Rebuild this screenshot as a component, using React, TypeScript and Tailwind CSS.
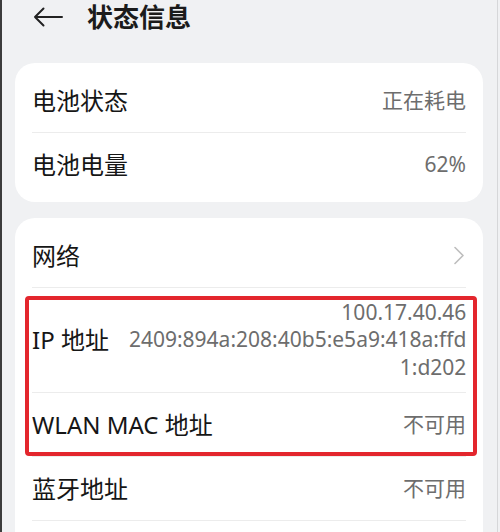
import React from "react";

const font = { fontFamily: '"Noto Sans", "Noto Sans CJK SC", sans-serif' };

function Row({
  label,
  value,
  divider = true,
  chevron = false,
}: {
  label: string;
  value?: React.ReactNode;
  divider?: boolean;
  chevron?: boolean;
}) {
  return (
    <div className={divider ? "border-b border-[#ececec]" : ""}>
      <div className="flex h-[63px] items-center justify-between gap-5">
        <div className="shrink-0 text-[24px] text-[#161616]">{label}</div>
        {value && (
          <div className="text-right text-[21px] text-[#6d6d6d]">{value}</div>
        )}
        {chevron && (
          <svg width="12" height="19" viewBox="0 0 12 19" className="mr-[1px]">
            <path
              d="M2 1.5 L10 9.5 L2 17.5"
              fill="none"
              stroke="#bdbdbd"
              strokeWidth="1.6"
              strokeLinecap="round"
              strokeLinejoin="round"
            />
          </svg>
        )}
      </div>
    </div>
  );
}

export default function App() {
  return (
    <main
      className="relative h-[532px] w-[500px] overflow-hidden bg-[#f0f1f3]"
      style={font}
    >
      <div className="absolute left-0 top-0 h-full w-[2px] bg-[#3c3c3c]" />
      <div className="absolute right-[2px] top-0 h-full w-[1px] bg-[#d6d7d9]" />

      <div className="flex h-[34px] items-center pl-[33px]">
        <svg width="30" height="20" viewBox="0 0 30 20">
          <path
            d="M29 10 H2 M10.5 1.5 L2 10 L10.5 18.5"
            fill="none"
            stroke="#222"
            strokeWidth="2"
            strokeLinecap="round"
            strokeLinejoin="round"
          />
        </svg>
        <h1 className="ml-[24px] text-[26px] font-semibold text-[#1b1b1b]">状态信息</h1>
      </div>

      <div className="ml-[15px] mt-[29px] w-[468px] space-y-[16px]">
        <section className="rounded-[20px] bg-white px-[17px] py-[6px]">
          <Row label="电池状态" value="正在耗电" />
          <Row label="电池电量" value="62%" divider={false} />
        </section>

        <section className="relative rounded-[20px] bg-white px-[17px] py-[6px]">
          <Row label="网络" chevron />
          <div className="border-b border-[#ececec]">
            <div className="flex h-[104px] items-center justify-between gap-5">
              <div className="shrink-0 text-[24px] text-[#161616]">IP 地址</div>
              <div className="text-right text-[21px] leading-[27.5px] text-[#6d6d6d]">
                <div>100.17.40.46</div>
                <div>2409:894a:208:40b5:e5a9:418a:ffd</div>
                <div>1:d202</div>
              </div>
            </div>
          </div>
          <Row label="WLAN MAC 地址" value="不可用" />
          <Row label="蓝牙地址" value="不可用" />
          <div className="h-[63px]" />

          <div className="pointer-events-none absolute left-[10px] top-[78px] h-[160px] w-[452px] rounded-[4px] border-[4px] border-[#e3262d]" />
        </section>
      </div>
    </main>
  );
}
